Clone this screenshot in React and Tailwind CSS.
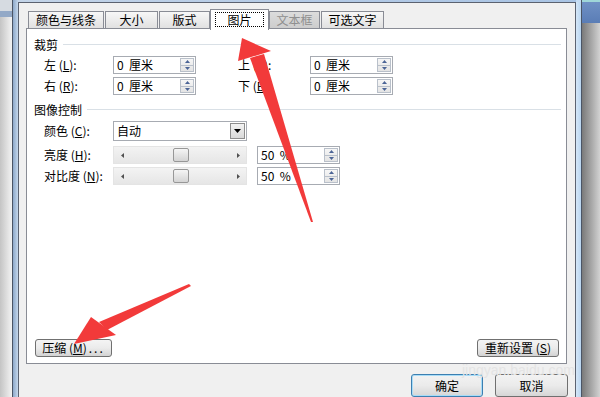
import React from "react";

function Spin() {
  return (
    <div className="ml-auto mr-[1px] my-[1px] w-[14px] flex flex-col border border-[#b9c0ca] bg-gradient-to-b from-[#f6f6f6] to-[#e4e4e4]">
      <div className="flex-1 flex items-center justify-center border-b border-[#b9c0ca]">
        <svg width="5" height="3"><polygon points="2.5,0 5,3 0,3" fill="#4b6496" /></svg>
      </div>
      <div className="flex-1 flex items-center justify-center">
        <svg width="5" height="3"><polygon points="0,0 5,0 2.5,3" fill="#4b6496" /></svg>
      </div>
    </div>
  );
}

function NumBox({ value }) {
  return (
    <div className="h-[18px] w-[83px] flex border border-[#a7abb2] bg-white">
      <span className="pl-[3px] self-center leading-none whitespace-pre">{value}</span>
      <Spin />
    </div>
  );
}

function Header({ text }) {
  return (
    <div className="flex items-center h-[16px]">
      <span>{text}</span>
      <div className="flex-1 h-px bg-[#d9e0e6] ml-[5px] mr-[5px] mt-[-2px]" />
    </div>
  );
}

function Slider() {
  return (
    <div className="h-[18px] w-[134px] flex items-center bg-gradient-to-b from-[#f3f3f3] to-[#e6e6e6] border border-[#e4e4e4]">
      <div className="w-[16px] flex justify-center">
        <svg width="3" height="5"><polygon points="3,0 3,5 0,2.5" fill="#505050" /></svg>
      </div>
      <div className="w-[43px]" />
      <div className="w-[16px] h-[14px] rounded-[2px] border border-[#979797] bg-gradient-to-b from-[#f5f5f5] to-[#d4d4d4]" />
      <div className="flex-1" />
      <div className="w-[16px] flex justify-center">
        <svg width="3" height="5"><polygon points="0,0 3,2.5 0,5" fill="#505050" /></svg>
      </div>
    </div>
  );
}

function Label({ w, name, k }) {
  return (
    <div className={w}>
      <span className="whitespace-pre">{name} (</span>
      <u>{k}</u>
      <span>):</span>
    </div>
  );
}

export default function App() {
  const tab = "h-[17px] flex items-center justify-center border-t border-l border-r border-[#898c95] bg-gradient-to-b from-[#f7f7f7] to-[#e1e1e1]";
  return (
    <div className="relative w-[600px] h-[397px] overflow-hidden flex text-[12px] leading-[16px] text-black font-['Noto_Sans_CJK_SC',sans-serif]">
      {/* left background strip */}
      <div className="w-[12px] flex flex-col">
        <div className="h-[11px] bg-[#d6dbe1]" />
        <div className="h-[6px] bg-[#93a9c7]" />
        <div className="flex-1 bg-gradient-to-r from-[#c4c4c4] to-[#f3f3f3]" />
      </div>

      {/* window */}
      <div className="w-[570px] flex flex-col border-l border-r border-[#4b5565]">
        <div className="h-[9px] flex">
          <div className="w-[5px] bg-gradient-to-r from-[#8ea9ca] to-[#c2d5ea]" />
          <div className="flex-1 bg-gradient-to-r from-[#c3d4e8] via-[#b5cbe6] to-[#a9c4e4]" />
          <div className="w-[5px] bg-[#c5dcf3]" />
        </div>
        <div className="flex-1 flex">
          <div className="w-[5px] bg-gradient-to-r from-[#8ea9ca] to-[#c6d8ec]" />
          {/* dialog body */}
          <div className="w-[558px] flex flex-col border-l border-r border-t border-[#5b6270] bg-[#f0f0f0] pt-[6px] pl-[7px]">
            {/* tabs */}
            <div className="h-[19px] flex items-end pl-[2px]">
              <div className={`w-[76px] ${tab}`}>颜色与线条</div>
              <div className={`ml-[1px] w-[53px] ${tab}`}>大小</div>
              <div className={`ml-[1px] w-[51px] ${tab}`}>版式</div>
              <div className="relative z-10 mb-[-2px] w-[59px] h-[21px] flex items-center justify-center border-t border-l border-r border-[#898c95] bg-white">
                <span className="w-[49px] h-[15px] mt-[-1px] flex items-center justify-center border border-dotted border-black">图片</span>
              </div>
              <div className="w-[51px] h-[17px] flex items-center justify-center border-t border-l border-r border-[#898c95] bg-gradient-to-b from-[#dcdcdc] to-[#cdcdcd] text-[#8f8f8f]">文本框</div>
              <div className={`ml-[1px] w-[63px] ${tab}`}>可选文字</div>
            </div>

            {/* panel */}
            <div className="w-[541px] h-[336px] border border-[#898c95] bg-white flex flex-col pt-[8px] pl-[7px] pb-[6px]">
              <Header text="裁剪" />
              <div className="mt-[3px] flex items-center pl-[10px]">
                <Label w="w-[69px]" name="左" k="L" />
                <NumBox value="0  厘米" />
                <Label w="ml-[42px] w-[72px]" name="上" k="T" />
                <NumBox value="0  厘米" />
              </div>
              <div className="mt-[3px] flex items-center pl-[10px]">
                <Label w="w-[69px]" name="右" k="R" />
                <NumBox value="0  厘米" />
                <Label w="ml-[42px] w-[72px]" name="下" k="B" />
                <NumBox value="0  厘米" />
              </div>

              <div className="mt-[7px]">
                <Header text="图像控制" />
              </div>
              <div className="mt-[3px] flex items-center pl-[10px]">
                <Label w="w-[69px]" name="颜色" k="C" />
                <div className="h-[20px] w-[134px] flex border border-[#a7abb2] bg-white">
                  <span className="pl-[3px] self-center">自动</span>
                  <div className="ml-auto my-[1px] mr-[1px] w-[15px] flex items-center justify-center border border-[#8d8d8d] bg-gradient-to-b from-[#f2f2f2] to-[#d9d9d9]">
                    <svg width="7" height="4"><polygon points="0,0 7,0 3.5,4" fill="#000" /></svg>
                  </div>
                </div>
              </div>
              <div className="mt-[5px] flex items-center pl-[10px]">
                <Label w="w-[69px]" name="亮度" k="H" />
                <Slider />
                <div className="ml-[10px]"><NumBox value="50  %" /></div>
              </div>
              <div className="mt-[3px] flex items-center pl-[10px]">
                <Label w="w-[69px]" name="对比度" k="N" />
                <Slider />
                <div className="ml-[10px]"><NumBox value="50  %" /></div>
              </div>

              <div className="flex-1" />
              <div className="flex items-center justify-between pl-[1px] pr-[7px]">
                <button className="h-[18px] w-[77px] flex items-center justify-center rounded-[3px] border border-[#707070] bg-gradient-to-b from-[#f4f4f4] via-[#ebebeb] to-[#d3d3d3]">
                  <span className="whitespace-pre">压缩 (</span><u>M</u><span>)</span><span className="tracking-[2px] ml-[2px]">...</span>
                </button>
                <button className="h-[18px] w-[82px] flex items-center justify-center rounded-[3px] border border-[#707070] bg-gradient-to-b from-[#f4f4f4] via-[#ebebeb] to-[#d3d3d3]">
                  <span className="whitespace-pre">重新设置 (</span><u>S</u><span>)</span>
                </button>
              </div>
            </div>

            {/* dialog buttons */}
            <div className="mt-[10px] flex justify-end gap-[12px] pr-[7px]">
              <button className="h-[23px] w-[72px] flex items-center justify-center rounded-[3px] border border-[#3c7fb1] shadow-[inset_0_0_0_1px_#a8dcf7] bg-gradient-to-b from-[#f2f2f2] via-[#ebebeb] to-[#d6d6d6]">确定</button>
              <button className="h-[23px] w-[73px] flex items-center justify-center rounded-[3px] border border-[#707070] bg-gradient-to-b from-[#f2f2f2] via-[#ebebeb] to-[#d6d6d6]">取消</button>
            </div>
          </div>
          <div className="w-[5px] bg-gradient-to-r from-[#d4e6f7] to-[#b9d5f0]" />
        </div>
      </div>

      {/* right background strip */}
      <div className="flex-1 flex flex-col">
        <div className="h-[23px] bg-gradient-to-b from-[#6f90c4] to-[#5a7db6] border-t-[2px] border-[#9fd6d8]" />
        <div className="flex-1 bg-gradient-to-r from-[#7a7a7a] to-[#d2d2d2]" />
      </div>

      {/* watermark */}
      <div className="absolute left-[462px] top-[364px] text-[14px] leading-[12px] text-[#e4e4e4] font-['Liberation_Sans',sans-serif] pointer-events-none">jingyan.baidu.com</div>

      {/* red arrows */}
      <svg className="absolute left-0 top-0 pointer-events-none" width="600" height="397">
        <polygon points="242,38 238,61 271,51" fill="#f23a3a" />
        <polygon points="250,58 264,54 313,222 311,222" fill="#f23a3a" />
        <polygon points="74,344 91,317 116,335" fill="#f23a3a" />
        <polygon points="99,322 107,330 191,286 189,284" fill="#f23a3a" />
      </svg>
    </div>
  );
}
